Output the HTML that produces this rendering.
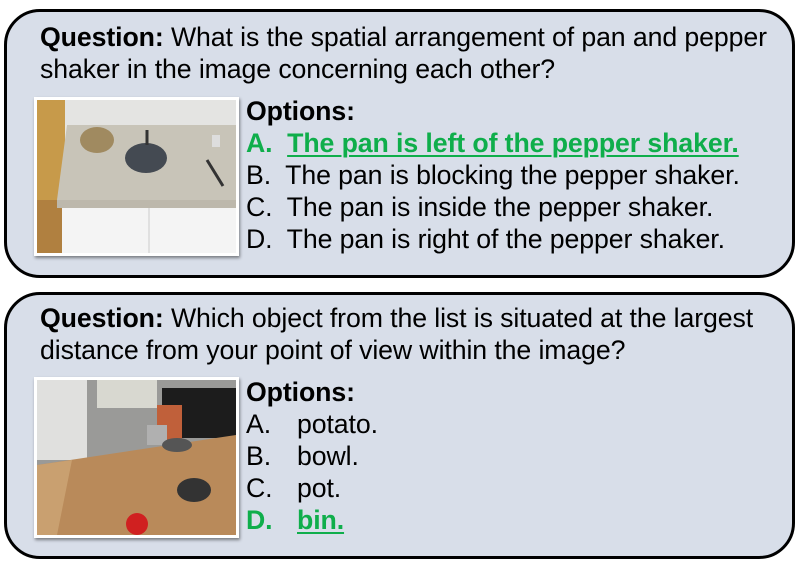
<!DOCTYPE html>
<html><head><style>
body{margin:0;width:797px;height:570px;background:#fff;position:relative;font-family:"Liberation Sans",sans-serif;overflow:hidden}
.box{position:absolute;left:4px;width:785px;border:3px solid #000;border-radius:36px;background:#d8dee9}
.t{position:absolute;font-size:26.7px;line-height:32px;color:#000;white-space:nowrap;letter-spacing:-0.1px}
.g{color:#0fae4b;font-weight:bold}
.g u{text-decoration-thickness:2px;text-underline-offset:3px}
.img{position:absolute;left:34px;width:199px;border:3px solid #fff;box-shadow:1px 2px 3px rgba(0,0,0,.45);overflow:hidden}
.w{position:absolute;left:51px}
</style></head><body>
<div class="box" style="top:9px;height:263px"></div>
<div class="t" style="left:40px;top:21px"><b>Question:</b> What is the spatial arrangement of pan and pepper</div>
<div class="t" style="left:40px;top:53px">shaker in the image concerning each other?</div>
<div class="img" style="top:97px;height:153px">
<svg width="199" height="153">
<rect width="199" height="153" fill="#e8e6e0"/>
<rect x="0" y="0" width="199" height="25" fill="#e4e4e2"/>
<rect x="0" y="0" width="28" height="153" fill="#c79a4a"/>
<rect x="0" y="100" width="28" height="53" fill="#b08040"/>
<polygon points="30,25 199,25 199,100 20,100" fill="#c8c4b8"/>
<polygon points="20,100 199,100 199,108 20,108" fill="#bdb8ac"/>
<rect x="25" y="108" width="174" height="45" fill="#f4f4f4"/>
<line x1="112" y1="108" x2="112" y2="153" stroke="#ccc"/>
<ellipse cx="60" cy="40" rx="17" ry="13" fill="#a08a60"/>
<ellipse cx="109" cy="58" rx="21" ry="15" fill="#444a52"/>
<line x1="110" y1="30" x2="110" y2="45" stroke="#333" stroke-width="3"/>
<line x1="170" y1="60" x2="186" y2="86" stroke="#333" stroke-width="3"/>
<rect x="175" y="35" width="8" height="12" fill="#ddd"/>
</svg></div>
<div class="t" style="left:246px;top:95px"><b>Options:</b></div>
<div class="t g" style="left:246px;top:127px">A.&nbsp; <u>The pan is left of the pepper shaker.</u></div>
<div class="t" style="left:246px;top:159px">B.&nbsp; The pan is blocking the pepper shaker.</div>
<div class="t" style="left:246px;top:191px">C.&nbsp; The pan is inside the pepper shaker.</div>
<div class="t" style="left:246px;top:223px">D.&nbsp; The pan is right of the pepper shaker.</div>

<div class="box" style="top:292px;height:261px"></div>
<div class="t" style="left:40px;top:302px"><b>Question:</b> Which object from the list is situated at the largest</div>
<div class="t" style="left:40px;top:334px">distance from your point of view within the image?</div>
<div class="img" style="top:377px;height:155px">
<svg width="199" height="155">
<rect width="199" height="155" fill="#9a9a98"/>
<rect x="0" y="0" width="50" height="80" fill="#e0e0de"/>
<rect x="60" y="0" width="60" height="28" fill="#d8d8d0"/>
<rect x="125" y="8" width="74" height="50" fill="#1c1c1c"/>
<rect x="120" y="25" width="25" height="40" fill="#c0603a"/>
<rect x="110" y="45" width="20" height="20" fill="#b0b0b0"/>
<polygon points="0,85 199,55 199,155 0,155" fill="#b98a5a"/>
<polygon points="0,85 35,80 20,155 0,155" fill="#c9a070"/>
<ellipse cx="157" cy="110" rx="17" ry="12" fill="#333"/>
<ellipse cx="140" cy="65" rx="15" ry="7" fill="#555"/>
<circle cx="100" cy="144" r="11" fill="#d02020"/>
</svg></div>
<div class="t" style="left:246px;top:376px"><b>Options:</b></div>
<div class="t" style="left:246px;top:408px;width:200px">A.<span class="w">potato.</span></div>
<div class="t" style="left:246px;top:440px;width:200px">B.<span class="w">bowl.</span></div>
<div class="t" style="left:246px;top:472px;width:200px">C.<span class="w">pot.</span></div>
<div class="t g" style="left:246px;top:504px;width:200px">D.<span class="w"><u>bin.</u></span></div>
</body></html>
